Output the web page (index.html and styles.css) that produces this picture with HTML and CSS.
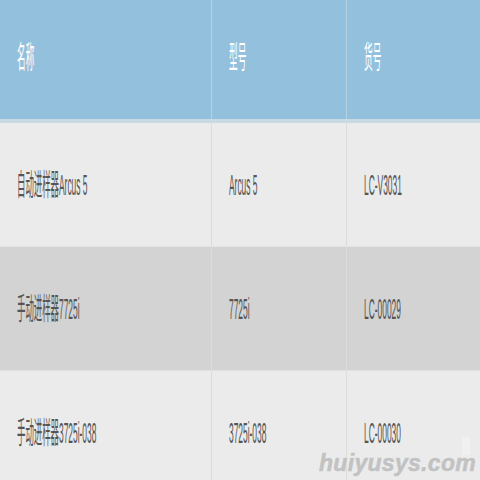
FILE: index.html
```html
<!DOCTYPE html>
<html lang="zh">
<head>
<meta charset="utf-8">
<title>进样器</title>
<link rel="stylesheet" href="styles.css">
</head>
<body>
<div class="table">
  <div class="row head">
    <div class="cell c1"><span class="t">名称</span></div>
    <div class="cell c2"><span class="t">型号</span></div>
    <div class="cell c3"><span class="t">货号</span></div>
  </div>
  <div class="row light">
    <div class="cell c1"><span class="t">自动进样器Arcus 5</span></div>
    <div class="cell c2"><span class="t">Arcus 5</span></div>
    <div class="cell c3"><span class="t">LC-V3031</span></div>
  </div>
  <div class="row dark">
    <div class="cell c1"><span class="t">手动进样器7725i</span></div>
    <div class="cell c2"><span class="t">7725i</span></div>
    <div class="cell c3"><span class="t">LC-00029</span></div>
  </div>
  <div class="row light">
    <div class="cell c1"><span class="t">手动进样器3725i-038</span></div>
    <div class="cell c2"><span class="t">3725i-038</span></div>
    <div class="cell c3"><span class="t">LC-00030</span></div>
  </div>
</div>
<div class="mark"><span class="mark-box"></span><span class="mark-text">huiyusys.com</span></div>
</body>
</html>
```

FILE: styles.css
```css
html, body {
  margin: 0;
  padding: 0;
  width: 480px;
  height: 480px;
  overflow: hidden;
  background: #ebebeb;
}
body {
  position: relative;
  font-family: "Liberation Sans", "Noto Sans CJK SC", sans-serif;
}
.table {
  display: flex;
  flex-direction: column;
}
.row {
  display: grid;
  grid-template-columns: 212px 135px 1fr;
  height: 124px;
  box-sizing: border-box;
  border-bottom: 1px solid #e2e2e2;
}
.row.head {
  height: 123px;
  background: #93c0dc;
  border-bottom: 4px solid #c8dbe5;
}
.row.light { background: #ebebeb; }
.row.dark { background: #d3d3d3; border-bottom-color: #e0e0e0; }
.cell {
  display: flex;
  align-items: center;
  padding-left: 17px;
  box-sizing: border-box;
  overflow: hidden;
}
.c1, .c2 { border-right: 1px solid #dcdcdc; }
.head .c1, .head .c2 { border-right-color: #b3d2e4; }
.t {
  display: inline-block;
  white-space: nowrap;
  font-size: 30px;
  line-height: 1;
  color: #555555;
  transform: scaleX(0.28);
  transform-origin: 0 50%;
}
.head .t {
  color: #ffffff;
  font-size: 31px;
  transform: scaleX(0.28);
  margin-top: -4px;
}
.mark {
  position: absolute;
  right: 4px;
  bottom: 3px;
}
.mark-text {
  font-family: "Liberation Sans", sans-serif;
  font-weight: bold;
  font-style: italic;
  font-size: 23px;
  letter-spacing: 0.3px;
  color: #c2c2c2;
  -webkit-text-stroke: 0.6px #c2c2c2;
  text-shadow: 0 0 2px #f4f4f4, 0 0 1px #ffffff;
}
.mark-box {
  position: absolute;
  right: 6px;
  bottom: 22px;
  width: 8px;
  height: 18px;
  background: #f2f2f2;
  opacity: 0.7;
}
```
